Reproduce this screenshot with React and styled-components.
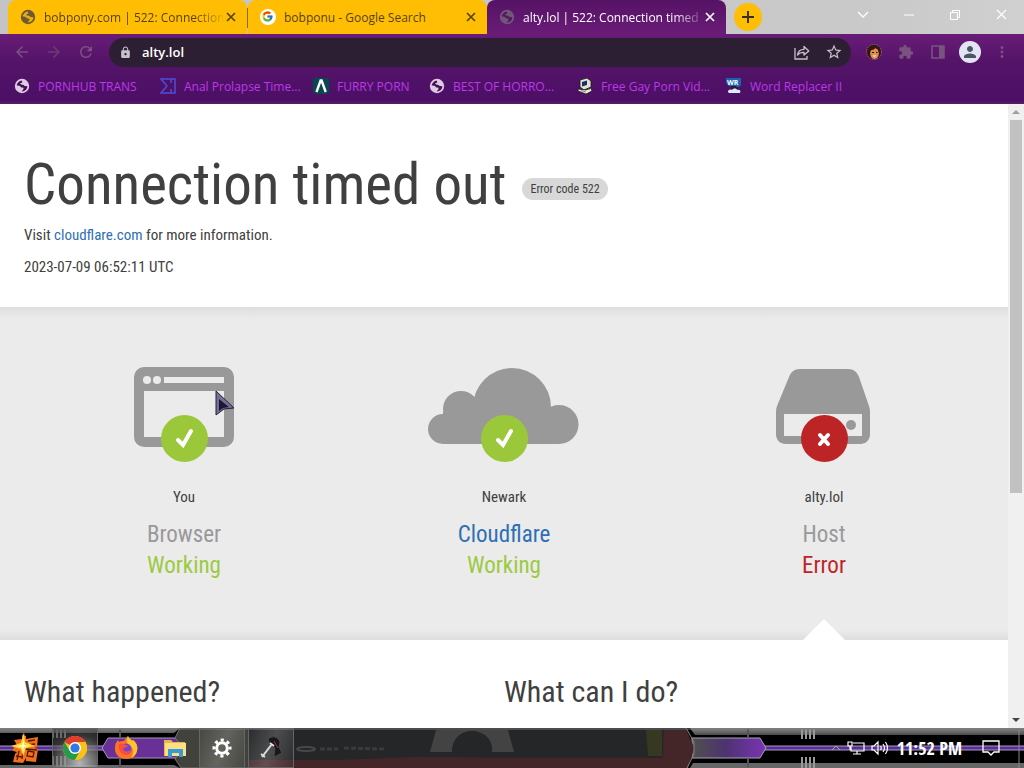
import React from 'react'
import styled, { createGlobalStyle } from 'styled-components'
import { FcGoogle } from 'react-icons/fc'
import { MdArrowBack, MdArrowForward, MdRefresh, MdLock, MdStarBorder, MdExtension, MdPerson, MdMoreVert } from 'react-icons/md'

const GlobalStyle = createGlobalStyle`
  * {
    box-sizing: border-box;
  }

  body {
    margin: 0;
    overflow: hidden;
  }

  a {
    text-decoration: none;
  }

  button {
    padding: 0;
    border: none;
    background: none;
    color: inherit;
    font: inherit;
    cursor: pointer;
  }

  svg {
    display: block;
    flex: none;
  }
`;

const Screen = styled.div`
  display: flex;
  flex-direction: column;
  height: 100vh;
  font-family: "Open Sans", sans-serif;
  font-size: 12px;
`;

/* browser window */

const TabStrip = styled.header`
  display: flex;
  height: 34px;
  padding-left: 8px;
  background: linear-gradient(90deg, #c4c4c6, #c9c9c9 85%, #d0d0d0);
`;

const Tab = styled.div`
  display: flex;
  align-items: center;
  gap: 8px;
  flex: 0 1 239px;
  min-width: 0;
  padding: 0 8px 0 12px;
  border-radius: 8px 8px 0 0;
  background: ${({ $active }) => ($active ? 'linear-gradient(#551264, #6a1c78)' : '#ffbe03')};
  color: ${({ $active }) => ($active ? '#fff' : '#57420c')};
`;

const Divider = styled.div`
  width: 1px;
  margin: 8px 0 6px;
  background: #8a6a10;
  box-shadow: 0 0 0 1px #ffbe03;
`;

const TabTitle = styled.button`
  flex: 1;
  min-width: 0;
  overflow: hidden;
  white-space: nowrap;
  text-align: left;
  mask-image: ${({ $fade }) => ($fade ? 'linear-gradient(90deg, #000 84%, #0002)' : 'none')};
`;

const CloseButton = styled.button`
  display: grid;
  place-items: center;
  width: 16px;
  height: 16px;
  margin-left: -8px;
`;

const NewTab = styled.button`
  display: grid;
  place-items: center;
  width: 28px;
  height: 28px;
  margin: 3px 0 0 8px;
  border-radius: 50%;
  background: #ffbe03;
  color: #3d3010;
`;

const WindowButtons = styled.div`
  display: flex;
  margin-left: auto;
  color: #fff;
`;

const WindowButton = styled.button`
  display: grid;
  place-items: center;
  width: 46px;
  height: 29px;
`;

const Chrome = styled.div`
  border-bottom: 2px solid #571a5c;
  background: linear-gradient(#681c77, #541468 40%, #4b0f66);
`;

const Toolbar = styled.div`
  display: flex;
  align-items: center;
  height: 36px;
  padding: 0 13px;
  gap: 14px;
  color: #79527f;
`;

const NavButton = styled.button`
  width: 18px;
  height: 18px;
  opacity: ${({ $dim }) => ($dim ? 0.6 : 1)};
`;

const Omnibox = styled.label`
  display: flex;
  align-items: center;
  flex: 1;
  height: 29px;
  padding: 0 8px 0 10px;
  gap: 10px;
  border-radius: 15px;
  background: #2d1f33;
  color: #c9bfcc;
`;

const Address = styled.input`
  flex: 1;
  min-width: 0;
  padding: 0;
  border: none;
  outline: none;
  background: none;
  color: #fff;
  font: 600 13px "Open Sans", sans-serif;
`;

const ToolButton = styled.button`
  display: grid;
  place-items: center;
  width: 18px;
  height: 22px;
`;

const OmniboxActions = styled.span`
  display: flex;
  gap: 14px;
`;

const Avatar = styled.button`
  display: grid;
  place-items: center;
  width: 22px;
  height: 22px;
  margin: 0 -2px;
  border-radius: 50%;
  background: #e3e4f2;
  color: #4a5565;
`;

const Bookmarks = styled.nav`
  display: flex;
  align-items: center;
  gap: 16px;
  height: 32px;
  padding: 0 14px;
`;

const Bookmark = styled.a`
  display: flex;
  align-items: center;
  gap: 8px;
  width: ${({ $width }) => $width}px;
  color: #bd38e6;
  white-space: nowrap;
`;

/* page */

const Viewport = styled.div`
  display: flex;
  flex: 1;
  min-height: 0;
`;

const Page = styled.main`
  flex: 1;
  overflow: hidden;
  background: #fff;
  color: #404040;
  font-family: "Roboto Condensed", "DejaVu Sans Condensed", sans-serif;
  font-size: 15px;
  line-height: 24px;
`;

const PageHeader = styled.section`
  padding: 43px 24px 28px;
`;

const TitleRow = styled.div`
  display: flex;
  align-items: center;
  gap: 16px;
`;

const Title = styled.h1`
  margin: 0;
  font-size: 57px;
  font-weight: 400;
  line-height: 76px;
`;

const ErrorCode = styled.span`
  margin-top: 8px;
  padding: 0 8px;
  border-radius: 11px;
  background: #d8d8d8;
  font-size: 12px;
  line-height: 22px;
`;

const Text = styled.p`
  margin: 0 0 8px;

  &:last-child {
    margin: 0;
  }
`;

const Link = styled.a`
  color: #2f6fb3;
`;

const StatusBand = styled.section`
  display: grid;
  grid-template-columns: repeat(3, 1fr);
  padding: 0 24px;
  background: linear-gradient(#dedede, #ebebeb 12px, #ebebeb calc(100% - 10px), #dedede);
`;

const Status = styled.div`
  position: relative;
  display: flex;
  flex-direction: column;
  align-items: center;
  padding: 60px 0 59px;
`;

const Picture = styled.div`
  position: relative;
  margin-bottom: 24px;
`;

const Place = styled.span`
  margin-bottom: 12px;
  line-height: 20px;
`;

const Line = styled.span`
  color: ${({ $color }) => $color};
  font-size: 23px;
  line-height: 31px;
`;

const Notch = styled.div`
  position: absolute;
  bottom: 0;
  width: 42px;
  height: 21px;
  background: #fff;
  clip-path: polygon(50% 0, 100% 100%, 0 100%);
`;

const Pointer = styled.svg`
  position: absolute;
  top: 23px;
  left: 111px;
`;

const Questions = styled.section`
  display: grid;
  grid-template-columns: 1fr 1fr;
  padding: 34px 24px;
`;

const Question = styled.h2`
  margin: 0;
  font-size: 30px;
  font-weight: 400;
  line-height: 36px;
`;

const Scrollbar = styled.div`
  display: flex;
  flex-direction: column;
  align-items: center;
  width: 16px;
  background: #f0f0f0;
`;

const ScrollButton = styled.button`
  display: grid;
  place-items: center;
  width: 16px;
  height: 16px;
  color: ${({ $dim }) => ($dim ? '#a0a0a0' : '#444')};
`;

const ScrollTrack = styled.div`
  flex: 1;
  width: 12px;
`;

const ScrollThumb = styled.div`
  height: 63%;
  background: #c1c1c1;
`;

/* taskbar */

const Taskbar = styled.footer`
  position: relative;
  display: flex;
  height: 40px;
  background: #000;
  color: #fff;
`;

const TaskbarArt = styled.svg`
  position: absolute;
  inset: 0;
  width: 100%;
  height: 100%;
`;

const TaskButton = styled.button`
  position: relative;
  display: grid;
  place-items: center;
  width: 49px;
  height: 40px;
`;

const StartButton = styled(TaskButton)`
  margin-right: 3px;
`;

const RunningButton = styled(TaskButton)`
  width: 46px;
  margin-right: 3px;
  border: 1px solid #66666a;
  background: ${({ $active }) => ($active ? 'radial-gradient(circle at 60% 90%, #b5b5b5, #55555599 65%, #30303088)' : 'linear-gradient(110deg, #ffffff08, #ffffff2e, #ffffff08)')};
`;

const Tray = styled.div`
  position: relative;
  display: flex;
  align-items: center;
  gap: 6px;
  margin-left: auto;
  padding-right: 24px;
`;

const Clock = styled.time`
  margin: 0 14px 0 2px;
  font-family: "Open Sans Condensed", "Roboto Condensed", sans-serif;
  font-size: 18px;
  font-weight: 700;
  line-height: 24px;
  white-space: nowrap;
`;

const Globe = ({ color = '#dccbe3', ink = '#43104f' }) => (
  <svg width="16" height="16" viewBox="0 0 16 16">
    <circle cx="8" cy="8" r="7.2" fill={color} />
    <path d="M7.5 2.6C5.6 3 3.4 4.6 2.6 7.3L6 7.9l1.2 1.5 2 .2.4 1.5-2 2.3c3.2.2 5.6-2 5.8-5.2l-2.4-.3-1.2-1.2-2.6-.2-.3-1.3 1.5-.9z" fill={ink} />
    <path d="M2.6 8.6l2.6.6.9 1.6.2 2.4C4.2 12.5 2.7 10.9 2.6 8.6zM9.5 2.7l-.7 1.6 1.8.5 1.3-.8z" fill={color} />
    <path d="M6.3 5.5L9 5.9l2 1.6" stroke={color} strokeWidth="1.2" fill="none" />
  </svg>
)

const Cross = () => (
  <svg width="12" height="12" viewBox="0 0 12 12">
    <path d="M2 2l8 8M10 2l-8 8" stroke="currentColor" strokeWidth="1.7" />
  </svg>
)

const GoogleMark = () => (
  <svg width="16" height="16" viewBox="0 0 16 16">
    <circle cx="8" cy="8" r="8" fill="#fff" />
    <FcGoogle x="1.5" y="1.5" width="13" height="13" />
  </svg>
)

const Sigma = () => (
  <svg width="16" height="16" viewBox="0 0 16 16">
    <path d="M1 1h14v14H1l6-7zM1 1h10v4M1 15h10v-4" fill="none" stroke="#4b4fd6" strokeWidth="1.5" />
  </svg>
)

const Lambda = () => (
  <svg width="16" height="16" viewBox="0 0 16 16">
    <rect width="16" height="16" rx="2" fill="#07474e" />
    <path d="M3.5 14L7.6 2.5h1L12.7 14" fill="none" stroke="#fff" strokeWidth="2.4" />
  </svg>
)

const OldComputer = () => (
  <svg width="16" height="16" viewBox="0 0 16 16">
    <path d="M3 2l7-2 4 3v6l-7 3-4-3z" fill="#e6e1cc" stroke="#18181c" strokeWidth=".8" />
    <path d="M5 4l5-1.5V7L5 8.5z" fill="#16306e" />
    <path d="M1 11l8 1 5-2 1 3-6 3-8-3z" fill="#f3f0e4" stroke="#18181c" strokeWidth=".8" />
    <path d="M4 12.5l5 1.5M11 11l2 1" stroke="#89846e" />
  </svg>
)

const WordReplacer = () => (
  <svg width="16" height="16" viewBox="0 0 16 16">
    <path d="M0 0h15v7l-2 2H4L0 5z" fill="#1b63b0" />
    <text x="1" y="7" fontSize="7" fontWeight="700" fill="#fff" fontFamily="Open Sans, sans-serif">WR</text>
    <path d="M4 8h6l2 3-4 1z" fill="#1d242c" />
    <path d="M2 14c0-3 3-3 4-2 1-2 5-2 5 0 3-1 4 1 3 3H3z" fill="#dcebfa" />
  </svg>
)

const ShareIcon = () => (
  <svg width="16" height="16" viewBox="0 0 16 16" fill="none" stroke="currentColor" strokeWidth="1.3">
    <path d="M1 4v11h12v-3" />
    <path d="M3.5 11C4 7.5 6 5.5 10 5.4V2.5L14.8 7 10 11V8.3C7 8.2 5 9 3.5 11z" strokeLinejoin="round" />
  </svg>
)

const Face = () => (
  <svg width="18" height="16" viewBox="0 0 18 16">
    <circle cx="9" cy="8" r="7.5" fill="#34180f" stroke="#98607f" strokeWidth="1" strokeDasharray="1.5 1" />
    <ellipse cx="9.5" cy="9.5" rx="4.3" ry="5.5" fill="#dd8d55" />
    <path d="M4 8c1-3 5-1 6-4 3 0 4 2 4 5 2-5-1-8-5-8S2 4 4 8z" fill="#34180f" />
    <path d="M7 8.5h2M11 8.5h1.5" stroke="#2b140d" />
    <path d="M7.5 11.5h4l-2 1.5z" fill="#fff" />
  </svg>
)

const Badge = ({ color, children }) => (
  <>
    <circle cx="80.5" cy="71.5" r="23.5" fill={color} />
    <g fill="none" stroke="#fff" strokeWidth="4" strokeLinecap="round">{children}</g>
  </>
)

const BrowserPicture = () => (
  <svg width="160" height="96" viewBox="0 0 160 96">
    <rect x="30" width="100" height="80" rx="10" fill="#999" />
    <circle cx="43" cy="13" r="4" fill="#ebebeb" />
    <circle cx="53" cy="13" r="4" fill="#ebebeb" />
    <path d="M60 10h60v6H60zM40 24h80v46H40z" fill="#ebebeb" />
    <Badge color="#9bc83a"><path d="M74 73l5 5 8-14" /></Badge>
  </svg>
)

const CloudPicture = () => (
  <svg width="160" height="96" viewBox="0 0 160 96">
    <g fill="#999">
      <circle cx="19" cy="62" r="15" />
      <circle cx="37" cy="42" r="18" />
      <circle cx="88" cy="40" r="39" />
      <circle cx="135" cy="57.5" r="19.5" />
      <path d="M19 77V45h36V30l80 30v17z" />
    </g>
    <Badge color="#9bc83a"><path d="M74 73l5 5 8-14" /></Badge>
  </svg>
)

const HostPicture = () => (
  <svg width="160" height="96" viewBox="0 0 160 96">
    <path d="M56 2h48c6 0 9 3 11 8l10 29c1 3 1 5 1 8v20c0 6-4 10-10 10H42c-6 0-10-4-10-10V47c0-3 0-5 1-8L45 10c2-5 5-8 11-8z" fill="#999" />
    <path d="M40 47h78v22H40z" fill="#ebebeb" />
    <circle cx="107" cy="58" r="5" fill="#999" />
    <Badge color="#bd2426"><path d="M76 68l8 9M84 68l-8 9" /></Badge>
  </svg>
)

const StartMark = () => (
  <svg width="30" height="32" viewBox="0 0 30 32">
    <path d="M4 8l8-1V3l4 1v3l12-2-1 10-3 1 4 1-2 13-10-1v-3l-3 5-10-1 2-8 2-2-4-1 1-5 3-1z" fill="#f4701a" />
    <path d="M18 9l7-1M17 13l8-1M18 19l6 1-1 5-6-1zM6 24l6 1M9 19l-2 9M13 18l-1 9M15 17l12 1" stroke="#541a06" strokeWidth="1.3" fill="none" />
    <path d="M14 0l1 10 10 4-9 2-3 8-2-7-10-3 10-3z" fill="#ffd83a" />
    <path d="M14 7v6l5 1-5 1-1 5-1-5-6-1 6-1z" fill="#fffbc8" />
  </svg>
)

const ChromeMark = () => (
  <svg width="24" height="24" viewBox="0 0 24 24">
    <circle cx="12" cy="12" r="12" fill="#fbc116" />
    <path d="M12 12L1.6 6A12 12 0 0 1 22.4 6H12z" fill="#e33b2e" />
    <path d="M1.6 6A12 12 0 0 0 12 24l5.2-9L12 12 6.8 15z" fill="#269a4b" />
    <path d="M22.4 6A12 12 0 0 1 12 24l5.2-9c1-2 1-6-1.5-9z" fill="#fbc116" />
    <circle cx="12" cy="12" r="6" fill="#fff" />
    <circle cx="12" cy="12" r="4.6" fill="#3179e4" />
  </svg>
)

const FirefoxMark = () => (
  <svg width="24" height="24" viewBox="0 0 24 24">
    <path d="M2 7l2-3 1 2c2-1 3-1 5-1 1-2 3-4 4-5 1 3 3 3 4 5l1-1c4 3 5 7 4 11-1 5-5 8-11 8S1 19 1 13c0-2 0-4 1-6z" fill="#ff7424" />
    <path d="M14 0c1 3 3 3 4 5l1-1c4 3 5 7 4 11-1 3-3 6-6 7 4-6 2-11-3-14-2-3-1-5 0-8z" fill="#ffc42c" />
    <circle cx="12" cy="13" r="5.5" fill="#7444cf" />
    <path d="M5 8c3-1 5 0 6 1l3 1c-1 2-4 1-5 3 1 3 5 3 8 1-1 5-9 6-11 1-1-2-2-4-1-7z" fill="#ff4d3c" />
  </svg>
)

const FolderMark = () => (
  <svg width="22" height="20" viewBox="0 0 22 20">
    <path d="M0 2h7l2 2h12v14H0z" fill="#e8b940" />
    <path d="M1 5h21v13H1z" fill="#fbdf87" />
    <path d="M4 19v-8h15v8h-4v-4H8v4z" fill="#3a9ad3" />
  </svg>
)

const GearMark = () => (
  <svg width="20" height="20" viewBox="0 0 20 20" fill="none" stroke="#fff">
    <circle cx="10" cy="10" r="5.3" strokeWidth="3" />
    <circle cx="10" cy="10" r="8" strokeWidth="3" strokeDasharray="3.14" strokeDashoffset="1.57" />
  </svg>
)

const ToolMark = () => (
  <svg width="26" height="24" viewBox="0 0 26 24">
    <path d="M10 3c5-4 10-2 12 3l-1 5 3 6-8 4 1-9-5-3z" fill="#191719" stroke="#54494b" strokeWidth=".8" />
    <path d="M4 21l10-13M3 18l4 3M12 7l4 3" stroke="#ddd" strokeWidth="2" fill="none" />
    <path d="M16 5l4 7" stroke="#8a3b40" />
  </svg>
)

const NetworkMark = () => (
  <svg width="18" height="16" viewBox="0 0 18 16" fill="none" stroke="#fff" strokeWidth="1.2">
    <path d="M6 3h11v8H4V7M10 11v3M6 14h8M1 2h4v4H1zM3 6v4" />
  </svg>
)

const SpeakerMark = () => (
  <svg width="18" height="16" viewBox="0 0 18 16" fill="none" stroke="#fff" strokeWidth="1.2">
    <path d="M1 6h2l4-4v12l-4-4H1zM9.5 6q1.5 2 0 4M12 4q3 4 0 8M14.5 2q4 6 0 12" />
  </svg>
)

const tabs = [
  { title: 'bobpony.com | 522: Connection', icon: <Globe color="#6b5a32" ink="#e9b013" />, fade: true },
  { title: 'bobponu - Google Search', icon: <GoogleMark /> },
  { title: 'alty.lol | 522: Connection timed', icon: <Globe color="#72577a" ink="#511b5e" />, active: true, fade: true },
]

const bookmarks = [
  { label: 'PORNHUB TRANS', icon: <Globe />, width: 130 },
  { label: 'Anal Prolapse Time...', icon: <Sigma />, width: 137 },
  { label: 'FURRY PORN', icon: <Lambda />, width: 100 },
  { label: 'BEST OF HORRO...', icon: <Globe />, width: 132 },
  { label: 'Free Gay Porn Vid...', icon: <OldComputer />, width: 133 },
  { label: 'Word Replacer II', icon: <WordReplacer />, width: 126 },
]

const ticks = [0, 4, 8, 12]

function BrowserChrome() {
  return (
    <>
      <TabStrip>
        {tabs.map((tab, i) => (
          <React.Fragment key={tab.title}>
            {i === 1 && <Divider />}
            <Tab $active={tab.active}>
              {tab.icon}
              <TabTitle $fade={tab.fade}>{tab.title}</TabTitle>
              <CloseButton aria-label="Close tab"><Cross /></CloseButton>
            </Tab>
          </React.Fragment>
        ))}
        <NewTab aria-label="New tab">
          <svg width="12" height="12" viewBox="0 0 12 12"><path d="M6 0v12M0 6h12" stroke="currentColor" strokeWidth="2" /></svg>
        </NewTab>
        <WindowButtons>
          <WindowButton aria-label="Search tabs">
            <svg width="12" height="8" viewBox="0 0 12 8"><path d="M1 1l5 5 5-5" fill="none" stroke="currentColor" strokeWidth="1.3" /></svg>
          </WindowButton>
          <WindowButton aria-label="Minimize">
            <svg width="10" height="2" viewBox="0 0 10 2"><path d="M0 1h10" stroke="currentColor" /></svg>
          </WindowButton>
          <WindowButton aria-label="Restore">
            <svg width="10" height="10" viewBox="0 0 10 10"><path d="M.5 2.5h7v7h-7zM2.5 2.5v-2h7v7h-2" fill="none" stroke="currentColor" /></svg>
          </WindowButton>
          <WindowButton aria-label="Close">
            <svg width="11" height="11" viewBox="0 0 11 11"><path d="M1 1l9 9M10 1l-9 9" stroke="currentColor" strokeWidth="1.2" /></svg>
          </WindowButton>
        </WindowButtons>
      </TabStrip>

      <Chrome>
        <Toolbar>
          <NavButton aria-label="Back"><MdArrowBack size={18} /></NavButton>
          <NavButton aria-label="Forward" $dim><MdArrowForward size={18} /></NavButton>
          <NavButton aria-label="Reload"><MdRefresh size={18} /></NavButton>
          <Omnibox>
            <MdLock size={13} />
            <Address aria-label="Address" defaultValue="alty.lol" />
            <OmniboxActions>
              <ToolButton aria-label="Share"><ShareIcon /></ToolButton>
              <ToolButton aria-label="Bookmark this page"><MdStarBorder size={18} /></ToolButton>
            </OmniboxActions>
          </Omnibox>
          <ToolButton aria-label="Extension"><Face /></ToolButton>
          <ToolButton aria-label="Extensions"><MdExtension size={16} /></ToolButton>
          <ToolButton aria-label="Side panel">
            <svg width="14" height="14" viewBox="0 0 14 14"><path d="M1 1h12v12H1z" fill="none" stroke="currentColor" strokeWidth="1.6" /><path d="M8 1h5v12H8z" fill="currentColor" /></svg>
          </ToolButton>
          <Avatar aria-label="Profile"><MdPerson size={18} /></Avatar>
          <ToolButton aria-label="Menu"><MdMoreVert size={18} /></ToolButton>
        </Toolbar>
        <Bookmarks>
          {bookmarks.map((item) => (
            <Bookmark key={item.label} href="#" $width={item.width}>{item.icon}{item.label}</Bookmark>
          ))}
        </Bookmarks>
      </Chrome>
    </>
  )
}

function ErrorPage() {
  return (
    <Page>
      <PageHeader>
        <TitleRow>
          <Title>Connection timed out</Title>
          <ErrorCode>Error code 522</ErrorCode>
        </TitleRow>
        <Text>Visit <Link href="#">cloudflare.com</Link> for more information.</Text>
        <Text>2023-07-09 06:52:11 UTC</Text>
      </PageHeader>

      <StatusBand>
        <Status>
          <Picture>
            <BrowserPicture />
            <Pointer width="20" height="27" viewBox="0 0 20 27">
              <path d="M1 1l18 17-10 1-8 6z" fill="#756f94" stroke="#25213b" />
              <path d="M4 9l10 8-6 1-4 3z" fill="#1b1735" />
            </Pointer>
          </Picture>
          <Place>You</Place>
          <Line $color="#999">Browser</Line>
          <Line $color="#9bca3e">Working</Line>
        </Status>
        <Status>
          <Picture><CloudPicture /></Picture>
          <Place>Newark</Place>
          <Line as="a" href="#" $color="#2f6fb3">Cloudflare</Line>
          <Line $color="#9bca3e">Working</Line>
        </Status>
        <Status>
          <Picture><HostPicture /></Picture>
          <Place>alty.lol</Place>
          <Line $color="#999">Host</Line>
          <Line $color="#bd2426">Error</Line>
          <Notch />
        </Status>
      </StatusBand>

      <Questions>
        <Question>What happened?</Question>
        <Question>What can I do?</Question>
      </Questions>
    </Page>
  )
}

function DesktopTaskbar() {
  return (
    <Taskbar>
      <TaskbarArt viewBox="0 0 1024 40" preserveAspectRatio="none">
        <defs>
          <linearGradient id="edge" x2="0" y2="1">
            <stop offset="0" stopColor="#8a8a8a" />
            <stop offset="1" stopColor="#4a4a4a" />
          </linearGradient>
          <linearGradient id="violet">
            <stop offset="0" stopColor="#50504c" />
            <stop offset=".45" stopColor="#4c336f" />
            <stop offset="1" stopColor="#7a35b5" />
          </linearGradient>
        </defs>
        <path d="M0 0h180l-6 5H0zM690 0h334v7H695z" fill="url(#edge)" />
        <path d="M0 37h174l6 3H0zM693 35h331v5H690z" fill="#666" />
        <path d="M0 20h104M764 20h260" stroke="#a99bc0" strokeWidth="5" />
        <path d="M0 20h104M764 20h260" stroke="#59309a" strokeWidth="3" />
        <path d="M180 10h-72l-6 10 6 10h72z" fill="#693097" stroke="#a79ab5" />
        <path d="M692 10h68l6 10-6 10h-68z" fill="url(#violet)" stroke="#aaa2b5" />
        {ticks.map((x) => (
          <path key={x} d={`M${x + 53} 1v9m0 18v11M${x + 802} 1v10m0 18v11`} stroke="#999" strokeWidth="2" />
        ))}
        <path d="M120 1v8m0 22v8M748 1v8m0 22v8" stroke="#555" strokeWidth="2" />
        <path d="M180 0l-5 10 9 10-9 11 6 9h69V0z" fill="#42423c" stroke="#77776f" />
        <path d="M248 0h438l8 20-6 20H248z" fill="#252628" />
        <path d="M248 32h90l78-3 120 1h150l-2 12H248zM664 2h22l8 18-6 20h-26z" fill="#442629" />
        <path d="M646 2h16v26h-14z" fill="#363821" />
        <path d="M436 2h72l6 22h-22c3-26-40-30-40 0h-22z" fill="#434343" />
        <ellipse cx="306" cy="21" rx="9" ry="2" fill="none" stroke="#484848" strokeWidth="2" />
        <path d="M320 21h18M344 20l40 1" stroke="#3b3b3b" strokeWidth="3" strokeDasharray="5 2" />
        <path d="M686 0l8 14v12l-7 14" fill="none" stroke="#8c8484" />
        <path d="M0 1h1024" stroke="#737373" />
        <path d="M1019 2v38" stroke="#888" />
      </TaskbarArt>
      <StartButton aria-label="Start"><StartMark /></StartButton>
      <RunningButton aria-label="Chrome" $active><ChromeMark /></RunningButton>
      <TaskButton aria-label="Firefox"><FirefoxMark /></TaskButton>
      <TaskButton aria-label="File Explorer"><FolderMark /></TaskButton>
      <RunningButton aria-label="Settings"><GearMark /></RunningButton>
      <RunningButton aria-label="Tool"><ToolMark /></RunningButton>
      <Tray>
        <svg width="10" height="6" viewBox="0 0 10 6"><path d="M1 5l4-4 4 4" fill="none" stroke="#aaa" /></svg>
        <NetworkMark />
        <SpeakerMark />
        <Clock>11:52 PM</Clock>
        <svg width="18" height="18" viewBox="0 0 18 18"><path d="M1 2h16v11h-5l-3 3-3-3H1z" fill="none" stroke="#fff" strokeWidth="1.3" /></svg>
      </Tray>
    </Taskbar>
  )
}

export default function App() {
  return (
    <Screen>
      <GlobalStyle />
      <BrowserChrome />
      <Viewport>
        <ErrorPage />
        <Scrollbar>
          <ScrollButton $dim aria-label="Scroll up">
            <svg width="8" height="4" viewBox="0 0 8 4"><path d="M0 4l4-4 4 4z" fill="currentColor" /></svg>
          </ScrollButton>
          <ScrollTrack><ScrollThumb /></ScrollTrack>
          <ScrollButton aria-label="Scroll down">
            <svg width="8" height="4" viewBox="0 0 8 4"><path d="M0 0l4 4 4-4z" fill="currentColor" /></svg>
          </ScrollButton>
        </Scrollbar>
      </Viewport>
      <DesktopTaskbar />
    </Screen>
  )
}
